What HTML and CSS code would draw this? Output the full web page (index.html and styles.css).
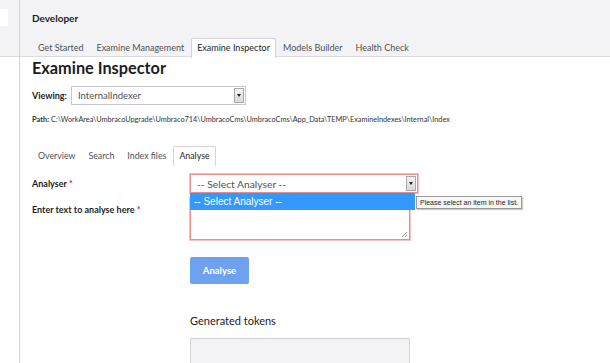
FILE: index.html
```html
<!DOCTYPE html>
<html>
<head>
<meta charset="utf-8">
<link rel="stylesheet" href="styles.css">
</head>
<body>
<div class="app">
  <aside class="sidebar">
    <div class="side-top"><div class="side-search"></div></div>
  </aside>
  <main class="main">
    <header class="header">
      <div class="section-title">Developer</div>
      <nav class="tabs">
        <span class="tab">Get Started</span>
        <span class="tab">Examine Management</span>
        <span class="tab active">Examine Inspector</span>
        <span class="tab">Models Builder</span>
        <span class="tab">Health Check</span>
      </nav>
    </header>
    <section class="content">
      <h1 class="title">Examine Inspector</h1>
      <div class="viewing">
        <span class="lbl">Viewing:</span>
        <div class="select sel-view"><span class="sel-text">InternalIndexer</span><span class="sel-btn"><span class="caret"></span></span></div>
      </div>
      <div class="path"><b>Path:</b> C:\WorkArea\UmbracoUpgrade\Umbraco714\UmbracoCms\UmbracoCms\App_Data\TEMP\ExamineIndexes\Internal\Index</div>
      <nav class="subtabs">
        <span class="tab">Overview</span>
        <span class="tab">Search</span>
        <span class="tab">Index files</span>
        <span class="tab active">Analyse</span>
      </nav>
      <div class="form">
        <div class="row row-sel">
          <span class="lbl">Analyser <i class="req">*</i></span>
          <div class="field">
            <div class="select sel-an invalid"><span class="sel-text">-- Select Analyser --</span><span class="sel-btn"><span class="caret"></span></span></div>
            <div class="dropdown">-- Select Analyser --</div>
            <div class="tooltip">Please select an item in the list.</div>
          </div>
        </div>
        <div class="row row-text">
          <span class="lbl">Enter text to analyse here <i class="req">*</i></span>
          <div class="field">
            <div class="textarea invalid"><span class="grip"></span></div>
          </div>
        </div>
        <div class="row">
          <span class="lbl"></span>
          <div class="field">
            <button class="btn">Analyse</button>
            <div class="gen-title">Generated tokens</div>
            <div class="tokens"></div>
          </div>
        </div>
      </div>
    </section>
  </main>
</div>
</body>
</html>
```
FILE: styles.css
```css
* { box-sizing: border-box; }
html, body { margin: 0; padding: 0; }
body {
  font-family: Lato, "Open Sans", "Liberation Sans", sans-serif;
  color: #1d1d1f;
  background: #fff;
  width: 610px;
  height: 363px;
  overflow: hidden;
}
.app { display: flex; height: 363px; }
.sidebar {
  width: 20px;
  border-right: 1px solid #d4d4d8;
  flex: none;
}
.side-top {
  height: 57px;
  background: #f3f3f5;
  border-bottom: 1px solid #dcdcde;
  padding-top: 9px;
}
.side-search { width: 8px; height: 17px; background: #fff; }
.main { flex: 1; min-width: 0; }
.header {
  height: 57px;
  background: #f3f3f5;
  border-bottom: 1px solid #dcdcde;
  padding: 11px 0 0 12px;
  display: flex;
  flex-direction: column;
}
.section-title { font-size: 10px; font-weight: 700; line-height: 14px; color: #1d1d1f; }
.tabs { display: flex; margin-top: 13px; }
.tab {
  font-size: 9px;
  line-height: 18px;
  height: 19px;
  padding: 0 5px;
  margin-right: 1px;
  color: #515054;
  border: 1px solid transparent;
  border-bottom: none;
  white-space: nowrap;
}
.tab.active {
  background: #fff;
  border-color: #d4d4d8;
  color: #1d1d1f;
  height: 20px;
  border-radius: 2px 2px 0 0;
}
.content { padding: 0 12px 0 12px; }
.title { font-size: 16.3px; font-weight: 700; margin: 0; line-height: 21px; }
.viewing { display: flex; align-items: center; margin-top: 8px; }
.lbl { font-size: 9px; font-weight: 700; color: #1d1d1f; }
.viewing .lbl { width: 39px; flex: none; }
.select {
  position: relative;
  height: 19px;
  border: 1px solid #c8c8cc;
  background: #fff;
  display: flex;
  align-items: center;
  font-size: 9.5px;
  color: #515054;
}
.sel-view { width: 175px; }
.sel-text { flex: 1; padding-left: 6px; }
.sel-btn {
  width: 10px;
  height: 15px;
  margin-right: 1px;
  border: 1px solid #aaa;
  background: linear-gradient(#f4f4f4, #d8d8d8);
  display: flex; align-items: center; justify-content: center;
}
.caret { width: 0; height: 0; border-left: 2.5px solid transparent; border-right: 2.5px solid transparent; border-top: 3px solid #222; }
.path { font-size: 7.3px; margin-top: 10px; color: #333; white-space: nowrap; }
.path b { font-size: 7.5px; }
.subtabs { display: flex; margin-top: 22px; }
.subtabs .tab { font-size: 8.8px; }
.form { margin-top: 8px; }
.row { display: flex; }
.row .lbl { width: 158px; flex: none; }
.row-sel .lbl { padding-top: 4px; }
.row-sel { margin-bottom: 5px; }
.req { color: #d42054; font-style: normal; }
.field { position: relative; }
.sel-an { width: 228px; height: 19px; font-size: 10.3px; }
.invalid { border: 1px solid #e88c8c; box-shadow: 0 0 0 1px #f4c4c4; }
.dropdown {
  position: absolute;
  left: 0; top: 19px;
  width: 225px; height: 17px;
  background: #3399ff;
  color: #fff;
  font-family: "Liberation Sans", Arial, sans-serif;
  font-size: 10px;
  line-height: 17px;
  padding-left: 4px;
  z-index: 3;
}
.tooltip {
  position: absolute;
  left: 226px; top: 22px;
  white-space: nowrap;
  background: #f8f8f8;
  border: 1px solid #9a9a9a;
  font-family: "Liberation Sans", Arial, sans-serif;
  font-size: 7px;
  padding: 2px 3px;
  color: #222;
  z-index: 4;
  box-shadow: 1px 1px 1px rgba(0,0,0,.2);
}
.row-text .lbl { padding-top: 6px; }
.textarea { position: relative; width: 220px; height: 42px; background: #fff; }
.grip { position: absolute; right: 2px; bottom: 2px; width: 5px; height: 5px; background: linear-gradient(135deg, transparent 45%, #999 45%, #999 55%, transparent 55%, transparent 75%, #999 75%, #999 85%, transparent 85%); }
.btn {
  margin-top: 17px;
  width: 59px; height: 27px;
  border: none; border-radius: 2px;
  background: #6ea2ef;
  color: #fff;
  font-family: Lato, sans-serif;
  font-weight: 700;
  font-size: 9.5px;
  display: block;
}
.gen-title { font-size: 11px; margin-top: 30px; color: #1d1d1f; line-height: 14px; }
.tokens { margin-top: 10px; width: 220px; height: 40px; background: #f3f3f5; border: 1px solid #d4d4d8; }
```
